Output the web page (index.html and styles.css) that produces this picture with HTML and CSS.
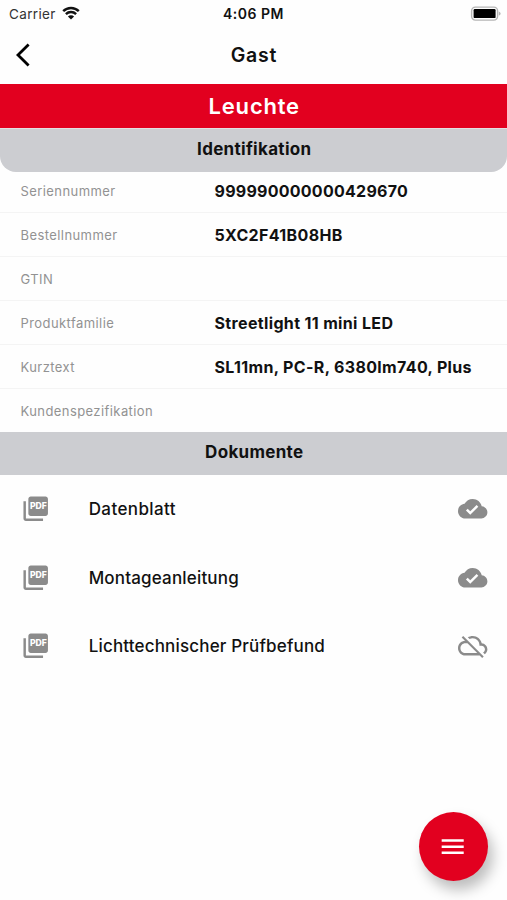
FILE: index.html
```html
<!DOCTYPE html>
<html lang="de">
<head>
<meta charset="utf-8">
<title>Leuchte</title>
<link rel="stylesheet" href="styles.css">
</head>
<body>
<div class="screen">
  <div class="status">
    <div class="carrier"><span>Carrier</span>
      <svg class="wifi" viewBox="0 0 18 14"><path d="M1.2 5.2a11 11 0 0 1 15.6 0M3.9 8.1a7.2 7.2 0 0 1 10.2 0"/><path class="dot" d="M9 13.6 5.9 10.5a4.4 4.4 0 0 1 6.2 0z"/></svg>
    </div>
    <div class="time">4:06 PM</div>
    <div class="battery"><svg viewBox="0 0 31 15"><rect class="shell" x="1.6" y="1.1" width="26" height="13" rx="3.8"/><rect x="3.6" y="3.1" width="22" height="9" rx="1.2"/><path class="cap" d="M28.8 5.4c2.4.8 2.4 3.4 0 4.2z"/></svg></div>
  </div>
  <header class="nav">
    <svg class="back" viewBox="0 0 16 24"><path d="M13.6 1.6 3 12l10.6 10.4"/></svg>
    <h1>Gast</h1>
  </header>
  <div class="banner">Leuchte</div>
  <h2 class="section rounded">Identifikation</h2>
  <dl class="fields">
    <div class="field"><dt>Seriennummer</dt><dd class="serial">999990000000429670</dd></div>
    <div class="field"><dt>Bestellnummer</dt><dd>5XC2F41B08HB</dd></div>
    <div class="field"><dt>GTIN</dt><dd></dd></div>
    <div class="field"><dt>Produktfamilie</dt><dd>Streetlight 11 mini LED</dd></div>
    <div class="field"><dt>Kurztext</dt><dd>SL11mn, PC-R, 6380lm740, Plus</dd></div>
    <div class="field"><dt>Kundenspezifikation</dt><dd></dd></div>
  </dl>
  <h2 class="section">Dokumente</h2>
  <ul class="docs">
    <li>
      <svg viewBox="0 0 24 24"><path d="M4 6H2v14c0 1.1.9 2 2 2h14v-2H4V6zM20 2H8c-1.1 0-2 .9-2 2v12c0 1.1.9 2 2 2h12c1.1 0 2-.9 2-2V4c0-1.1-.9-2-2-2z"/><text class="pdf-text" x="7.3" y="12.5" textLength="13.8" lengthAdjust="spacingAndGlyphs">PDF</text></svg>
      <span class="wide">Datenblatt</span>
      <svg viewBox="0 0 24 24"><path d="M19.35 10.04C18.67 6.59 15.64 4 12 4 9.11 4 6.6 5.64 5.35 8.04 2.34 8.36 0 10.91 0 14c0 3.31 2.69 6 6 6h13c2.76 0 5-2.24 5-5 0-2.64-2.05-4.78-4.65-4.96zM10 17l-3.5-3.5 1.41-1.41L10 14.17 15.18 9l1.41 1.41L10 17z"/></svg>
    </li>
    <li>
      <svg viewBox="0 0 24 24"><path d="M4 6H2v14c0 1.1.9 2 2 2h14v-2H4V6zM20 2H8c-1.1 0-2 .9-2 2v12c0 1.1.9 2 2 2h12c1.1 0 2-.9 2-2V4c0-1.1-.9-2-2-2z"/><text class="pdf-text" x="7.3" y="12.5" textLength="13.8" lengthAdjust="spacingAndGlyphs">PDF</text></svg>
      <span>Montageanleitung</span>
      <svg viewBox="0 0 24 24"><path d="M19.35 10.04C18.67 6.59 15.64 4 12 4 9.11 4 6.6 5.64 5.35 8.04 2.34 8.36 0 10.91 0 14c0 3.31 2.69 6 6 6h13c2.76 0 5-2.24 5-5 0-2.64-2.05-4.78-4.65-4.96zM10 17l-3.5-3.5 1.41-1.41L10 14.17 15.18 9l1.41 1.41L10 17z"/></svg>
    </li>
    <li>
      <svg viewBox="0 0 24 24"><path d="M4 6H2v14c0 1.1.9 2 2 2h14v-2H4V6zM20 2H8c-1.1 0-2 .9-2 2v12c0 1.1.9 2 2 2h12c1.1 0 2-.9 2-2V4c0-1.1-.9-2-2-2z"/><text class="pdf-text" x="7.3" y="12.5" textLength="13.8" lengthAdjust="spacingAndGlyphs">PDF</text></svg>
      <span>Lichttechnischer Prüfbefund</span>
      <svg viewBox="0 0 24 24"><path d="M19.35 10.04C18.67 6.59 15.64 4 12 4c-1.48 0-2.85.43-4.01 1.17l1.46 1.46C10.21 6.23 11.08 6 12 6c3.04 0 5.5 2.46 5.5 5.5v.5H19c1.66 0 3 1.34 3 3 0 1.13-.64 2.11-1.56 2.62l1.45 1.45C23.16 18.16 24 16.68 24 15c0-2.64-2.05-4.78-4.65-4.96zM3 5.27l2.75 2.74C2.56 8.15 0 10.77 0 14c0 3.31 2.69 6 6 6h11.73l2 2L21 20.73 4.27 4 3 5.27zM7.73 10l8 8H6c-2.21 0-4-1.79-4-4s1.79-4 4-4h1.73z"/></svg>
    </li>
  </ul>
  <button class="fab" aria-label="Menü"><svg viewBox="0 0 24 24"><path d="M3 18h18v-2H3v2zm0-5h18v-2H3v2zm0-7v2h18V6H3z"/></svg></button>
</div>
</body>
</html>
```
FILE: styles.css
```css
* { box-sizing: border-box; margin: 0; padding: 0; }
body { font-family: Inter, "Liberation Sans", sans-serif; background: #fefefe; color: #111; }
.screen { position: relative; width: 507px; height: 900px; overflow: hidden; }
.status { display: grid; grid-template-columns: 1fr auto 1fr; align-items: center; height: 27px; padding: 0 7px 0 9px; font-size: 13.5px; }
.carrier { display: flex; align-items: center; gap: 6px; color: #333; letter-spacing: .35px; }
.wifi { width: 18px; height: 14px; margin-top: -2px; fill: none; stroke: #111; stroke-width: 2.4; }
.wifi .dot { fill: #111; stroke: none; }
.time { font-size: 14px; font-weight: 600; letter-spacing: .5px; margin-right: 2px; }
.battery { display: flex; justify-content: flex-end; }
.battery svg { width: 31px; height: 15px; margin-right: -1px; fill: #000; }
.battery .shell { fill: none; stroke: #b5b5b5; stroke-width: 1.4; }
.battery .cap { fill: #b5b5b5; }
.nav { display: grid; grid-template-columns: 60px 1fr 60px; align-items: center; height: 57px; padding-bottom: 2px; }
.back { width: 16px; height: 24px; margin-left: 15px; fill: none; stroke: #000; stroke-width: 2.8; }
.nav h1 { padding-left: 1px; text-align: center; font-size: 19.5px; font-weight: 600; letter-spacing: .8px; }
.banner { height: 44px; padding-left: 1.5px; line-height: 45px; background: #e2001f; color: #fff; text-align: center; font-size: 22px; font-weight: 600; letter-spacing: .8px; }
.section { height: 43px; padding-left: 1.5px; line-height: 40px; background: #cccdd1; text-align: center; font-size: 17px; font-weight: 700; letter-spacing: .3px; }
.rounded { height: 44px; line-height: 41px; border-top: 1px solid #e4dfe2; border-radius: 0 0 16px 16px; }
.fields { height: 259px; margin-top: -3px; }
.field { display: grid; grid-template-columns: 194px 1fr; align-items: center; height: 44px; padding-left: 20.5px; border-bottom: 1px solid #f4f4f4; }
.field:last-child { border-bottom: 0; }
dt { font-size: 13px; color: #929292; letter-spacing: .42px; }
dd { font-size: 16px; font-weight: 700; letter-spacing: .35px; white-space: nowrap; }
.serial { letter-spacing: .25px; }
.fields + .section { margin-top: 4px; }
.docs { list-style: none; }
.docs li { display: grid; grid-template-columns: 68px 1fr 29.4px; align-items: center; height: 68.5px; padding: 0 19.5px 0 20.7px; }
.docs svg { width: 29.4px; height: 29.4px; margin-top: -1px; fill: #8b8b8b; }
.docs span { font-size: 17px; font-weight: 500; letter-spacing: .17px; }
.docs .wide { letter-spacing: .4px; }
.docs .pdf-text { font: 800 7.4px Inter, sans-serif; fill: #fff; }
.fab { position: absolute; left: 419px; top: 812px; width: 69px; height: 69px; display: flex; align-items: center; justify-content: center; border: 0; border-radius: 50%; background: #e2001f; box-shadow: 5px 9px 14px rgba(0, 0, 0, .26); }
.fab svg { width: 29.4px; height: 29.4px; margin-left: -1px; fill: #fff; }
```
